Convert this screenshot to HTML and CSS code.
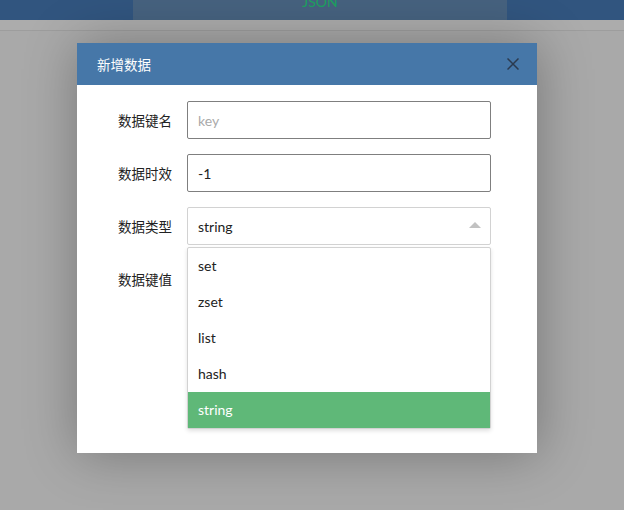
FILE: index.html
```html
<!DOCTYPE html>
<html lang="zh">
<head>
<meta charset="utf-8">
<title>新增数据</title>
<link rel="stylesheet" href="styles.css">
</head>
<body>
<div class="page">
  <div class="topbar">
    <div class="tab"><span class="tab-label">JSON</span></div>
  </div>
  <div class="subbar"></div>
</div>

<div class="modal">
  <div class="modal-head">
    <span class="modal-title">新增数据</span>
    <svg class="close" width="12" height="12" viewBox="0 0 12 12">
      <path d="M0.5 0.5 L11.5 11.5 M11.5 0.5 L0.5 11.5" stroke="#2b3a4f" stroke-width="1.5" fill="none"/>
    </svg>
  </div>
  <div class="modal-body">
    <form class="form">
      <div class="item">
        <label class="label">数据键名</label>
        <div class="block"><input class="input" type="text" placeholder="key"></div>
      </div>
      <div class="item">
        <label class="label">数据时效</label>
        <div class="block"><input class="input" type="text" value="-1"></div>
      </div>
      <div class="item">
        <label class="label">数据类型</label>
        <div class="block select">
          <div class="select-title"><span>string</span><i class="tri"></i></div>
          <dl class="options">
            <dd class="opt">set</dd>
            <dd class="opt">zset</dd>
            <dd class="opt">list</dd>
            <dd class="opt">hash</dd>
            <dd class="opt selected">string</dd>
          </dl>
        </div>
      </div>
      <div class="item">
        <label class="label">数据键值</label>
        <div class="block"><textarea class="textarea"></textarea></div>
      </div>
    </form>
  </div>
</div>
</body>
</html>
```

FILE: styles.css
```css
html, body {
  margin: 0;
  padding: 0;
}
body {
  background: #a9a9a9;
  font-family: Lato, "Noto Sans CJK SC", sans-serif;
  font-size: 14px;
  color: #222;
  width: 624px;
  height: 510px;
  overflow: hidden;
}
.topbar {
  height: 20px;
  background: #31557f;
  overflow: hidden;
}
.tab {
  margin-left: 133px;
  width: 374px;
  height: 20px;
  background: #46627f;
  text-align: center;
  overflow: hidden;
}
.tab-label {
  display: block;
  line-height: 20px;
  margin-top: -8px;
  color: #1ba35f;
  font-size: 14px;
}
.subbar {
  height: 10px;
  background: #acacac;
  border-bottom: 1px solid #9d9d9d;
}

.modal {
  position: absolute;
  left: 77px;
  top: 43px;
  width: 460px;
  height: 410px;
  background: #fff;
  box-shadow: 1px 1px 50px rgba(0, 0, 0, 0.3);
}
.modal-head {
  height: 42px;
  background: #4677a8;
  color: #fff;
  display: flex;
  align-items: center;
  justify-content: space-between;
  padding: 0 18px 0 20px;
  font-family: "Noto Sans CJK SC", sans-serif;
  font-size: 13.5px;
}
.close {
  display: block;
}
.modal-body {
  padding: 16px 46px 0 0;
}
.form {
  margin: 0;
}
.item {
  display: flex;
  margin-bottom: 15px;
}
.label {
  flex: none;
  width: 80px;
  padding: 9px 15px;
  line-height: 20px;
  text-align: right;
  font-family: "Noto Sans CJK SC", sans-serif;
  font-size: 13.5px;
  color: #222;
}
.block {
  flex: 1;
  position: relative;
}
.input {
  display: block;
  width: 100%;
  height: 38px;
  box-sizing: border-box;
  border: 1px solid #7f7f7f;
  border-radius: 2px;
  padding: 0 10px;
  font-family: Lato, sans-serif;
  font-size: 14px;
  color: #222;
  outline: none;
  background: #fff;
}
.input::placeholder {
  color: #aaa;
}
.select-title {
  height: 38px;
  box-sizing: border-box;
  border: 1px solid #d2d2d2;
  border-radius: 2px;
  padding: 0 9px 0 10px;
  display: flex;
  align-items: center;
  justify-content: space-between;
  color: #222;
}
.tri {
  width: 0;
  height: 0;
  border-style: solid;
  border-width: 0 6px 6px 6px;
  border-color: transparent transparent #c2c2c2 transparent;
  margin-top: -2px;
}
.options {
  position: absolute;
  left: 0;
  right: 0;
  top: 40px;
  margin: 0;
  padding: 0;
  background: #fff;
  border: 1px solid #d2d2d2;
  border-radius: 2px;
  box-shadow: 0 2px 4px rgba(0, 0, 0, 0.12);
  z-index: 10;
}
.opt {
  margin: 0;
  height: 36px;
  line-height: 36px;
  padding: 0 10px;
  color: #222;
}
.opt.selected {
  background: #5fb878;
  color: #fff;
}
.textarea {
  display: block;
  width: 100%;
  min-height: 100px;
  box-sizing: border-box;
  border: 1px solid #7f7f7f;
  resize: none;
}
```
